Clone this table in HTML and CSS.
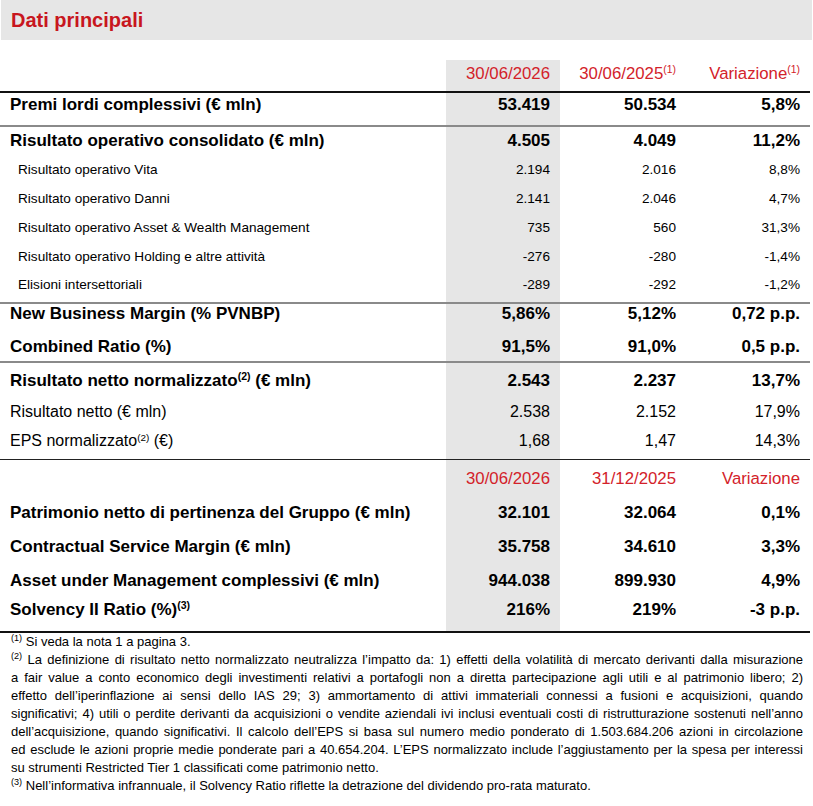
FILE: index.html
```html
<!DOCTYPE html>
<html lang="it">
<head>
<meta charset="utf-8">
<title>Dati principali</title>
<link rel="stylesheet" href="styles.css">
</head>
<body>
<div class="page">
  <div class="title">Dati principali</div>
  <table class="kpi">
    <colgroup>
      <col class="col-label">
      <col class="col-a">
      <col class="col-b">
      <col class="col-c">
    </colgroup>
    <tbody>
      <tr class="head">
        <td></td>
        <td class="num hl">30/06/2026</td>
        <td class="num">30/06/2025<sup>(1)</sup></td>
        <td class="num">Variazione<sup>(1)</sup></td>
      </tr>
      <tr class="main premi line-gray">
        <td>Premi lordi complessivi (€ mln)</td>
        <td class="num hl">53.419</td>
        <td class="num">50.534</td>
        <td class="num">5,8%</td>
      </tr>
      <tr class="main consol">
        <td>Risultato operativo consolidato (€ mln)</td>
        <td class="num hl">4.505</td>
        <td class="num">4.049</td>
        <td class="num">11,2%</td>
      </tr>
      <tr class="sub">
        <td>Risultato operativo Vita</td>
        <td class="num hl">2.194</td>
        <td class="num">2.016</td>
        <td class="num">8,8%</td>
      </tr>
      <tr class="sub">
        <td>Risultato operativo Danni</td>
        <td class="num hl">2.141</td>
        <td class="num">2.046</td>
        <td class="num">4,7%</td>
      </tr>
      <tr class="sub">
        <td>Risultato operativo Asset &amp; Wealth Management</td>
        <td class="num hl">735</td>
        <td class="num">560</td>
        <td class="num">31,3%</td>
      </tr>
      <tr class="sub">
        <td>Risultato operativo Holding e altre attività</td>
        <td class="num hl">-276</td>
        <td class="num">-280</td>
        <td class="num">-1,4%</td>
      </tr>
      <tr class="sub sub-last line-gray">
        <td>Elisioni intersettoriali</td>
        <td class="num hl">-289</td>
        <td class="num">-292</td>
        <td class="num">-1,2%</td>
      </tr>
      <tr class="main pair-top">
        <td>New Business Margin (% PVNBP)</td>
        <td class="num hl">5,86%</td>
        <td class="num">5,12%</td>
        <td class="num">0,72 p.p.</td>
      </tr>
      <tr class="main pair-bottom line-gray">
        <td>Combined Ratio (%)</td>
        <td class="num hl">91,5%</td>
        <td class="num">91,0%</td>
        <td class="num">0,5 p.p.</td>
      </tr>
      <tr class="main net net-first">
        <td>Risultato netto normalizzato<sup>(2)</sup> (€ mln)</td>
        <td class="num hl">2.543</td>
        <td class="num">2.237</td>
        <td class="num">13,7%</td>
      </tr>
      <tr class="reg net net-mid">
        <td>Risultato netto (€ mln)</td>
        <td class="num hl">2.538</td>
        <td class="num">2.152</td>
        <td class="num">17,9%</td>
      </tr>
      <tr class="reg net eps line-dark">
        <td>EPS normalizzato<sup>(2)</sup> (€)</td>
        <td class="num hl">1,68</td>
        <td class="num">1,47</td>
        <td class="num">14,3%</td>
      </tr>
      <tr class="head head2">
        <td></td>
        <td class="num hl">30/06/2026</td>
        <td class="num">31/12/2025</td>
        <td class="num">Variazione</td>
      </tr>
      <tr class="main bal">
        <td>Patrimonio netto di pertinenza del Gruppo (€ mln)</td>
        <td class="num hl">32.101</td>
        <td class="num">32.064</td>
        <td class="num">0,1%</td>
      </tr>
      <tr class="main bal">
        <td>Contractual Service Margin (€ mln)</td>
        <td class="num hl">35.758</td>
        <td class="num">34.610</td>
        <td class="num">3,3%</td>
      </tr>
      <tr class="main bal">
        <td>Asset under Management complessivi (€ mln)</td>
        <td class="num hl">944.038</td>
        <td class="num">899.930</td>
        <td class="num">4,9%</td>
      </tr>
      <tr class="main bal last">
        <td>Solvency II Ratio (%)<sup>(3)</sup></td>
        <td class="num hl">216%</td>
        <td class="num">219%</td>
        <td class="num">-3 p.p.</td>
      </tr>
    </tbody>
  </table>
  <div class="notes">
    <p class="note-line"><sup>(1)</sup> Si veda la nota 1 a pagina 3.</p>
    <p class="note-line full"><sup>(2)</sup> La definizione di risultato netto normalizzato neutralizza l’impatto da: 1) effetti della volatilità di mercato derivanti dalla misurazione</p>
    <p class="note-line full">a fair value a conto economico degli investimenti relativi a portafogli non a diretta partecipazione agli utili e al patrimonio libero; 2)</p>
    <p class="note-line full">effetto dell’iperinflazione ai sensi dello IAS 29; 3) ammortamento di attivi immateriali connessi a fusioni e acquisizioni, quando</p>
    <p class="note-line full">significativi; 4) utili o perdite derivanti da acquisizioni o vendite aziendali ivi inclusi eventuali costi di ristrutturazione sostenuti nell’anno</p>
    <p class="note-line full">dell’acquisizione, quando significativi. Il calcolo dell’EPS si basa sul numero medio ponderato di 1.503.684.206 azioni in circolazione</p>
    <p class="note-line full">ed esclude le azioni proprie medie ponderate pari a 40.654.204. L’EPS normalizzato include l’aggiustamento per la spesa per interessi</p>
    <p class="note-line">su strumenti Restricted Tier 1 classificati come patrimonio netto.</p>
    <p class="note-line"><sup>(3)</sup> Nell’informativa infrannuale, il Solvency Ratio riflette la detrazione del dividendo pro-rata maturato.</p>
  </div>
</div>
</body>
</html>
```

FILE: styles.css
```css
html, body {
  margin: 0;
  padding: 0;
  background: #ffffff;
}

body {
  font-family: "Liberation Sans", Arial, sans-serif;
  color: #000000;
}

.page {
  width: 811px;
  padding-left: 1px;
}

.title {
  height: 40px;
  background: #e6e6e6;
  color: #c8161e;
  font-weight: bold;
  font-size: 20px;
  line-height: 40px;
  padding-left: 10px;
  margin-bottom: 20px;
}

.kpi {
  width: 810px;
  margin-left: -1px;
  border-collapse: collapse;
  table-layout: fixed;
}

.col-label { width: 446px; }
.col-a { width: 114px; }
.col-b { width: 126px; }
.col-c { width: 124px; }

.kpi td {
  box-sizing: border-box;
  padding: 0 0 0 10px;
  vertical-align: middle;
  white-space: nowrap;
}

.kpi td.num {
  text-align: right;
  padding-right: 10px;
  padding-left: 0;
}

.kpi td.hl {
  background: #e6e6e6;
}

.kpi sup {
  font-size: 0.62em;
  line-height: 0;
  vertical-align: 0.55em;
}

/* header rows */
.head td {
  height: 32px;
  padding-bottom: 4px;
  color: #d3222a;
  font-size: 16.8px;
  border-bottom: 2px solid #111111;
}

.kpi .head2 td {
  height: 37px;
  padding-top: 2px;
  padding-bottom: 0;
  border-bottom: none;
}

/* text styles */
.main td {
  font-weight: bold;
  font-size: 17px;
}

.reg td {
  font-size: 16px;
}

.sub td {
  font-size: 13.6px;
  height: 29px;
  padding-bottom: 5px;
}

.kpi .sub td:first-child {
  padding-left: 18px;
}

/* separators */
.line-gray td {
  border-bottom: 2px solid #8a8a8a;
}

.line-dark td {
  border-bottom: 1px solid #222222;
}

/* row geometry */
.premi td {
  height: 34px;
  padding-bottom: 8px;
}

.consol td {
  height: 31px;
  padding-bottom: 2px;
}

.kpi .sub-last td {
  height: 30px;
  padding-bottom: 6px;
}

.pair-top td {
  height: 29px;
  padding-bottom: 8px;
}

.pair-bottom td {
  height: 30px;
  padding-bottom: 0;
}

.net td {
  height: 32px;
}

.net-first td {
  padding-top: 5px;
}

.net-mid td {
  padding-top: 4px;
}

.kpi .eps td {
  height: 33px;
  padding-bottom: 3px;
}

.bal td {
  height: 34px;
}

.last td {
  padding-bottom: 10px;
  border-bottom: 2px solid #111111;
}

/* footnotes */
.notes {
  padding: 0 9px 0 10px;
  font-size: 13px;
  line-height: 18px;
}

.note-line {
  margin: 0;
  white-space: nowrap;
}

.note-line.full {
  text-align: justify;
  text-align-last: justify;
  white-space: normal;
}

.notes sup {
  font-size: 0.7em;
  line-height: 0;
  vertical-align: 0.5em;
}
```
